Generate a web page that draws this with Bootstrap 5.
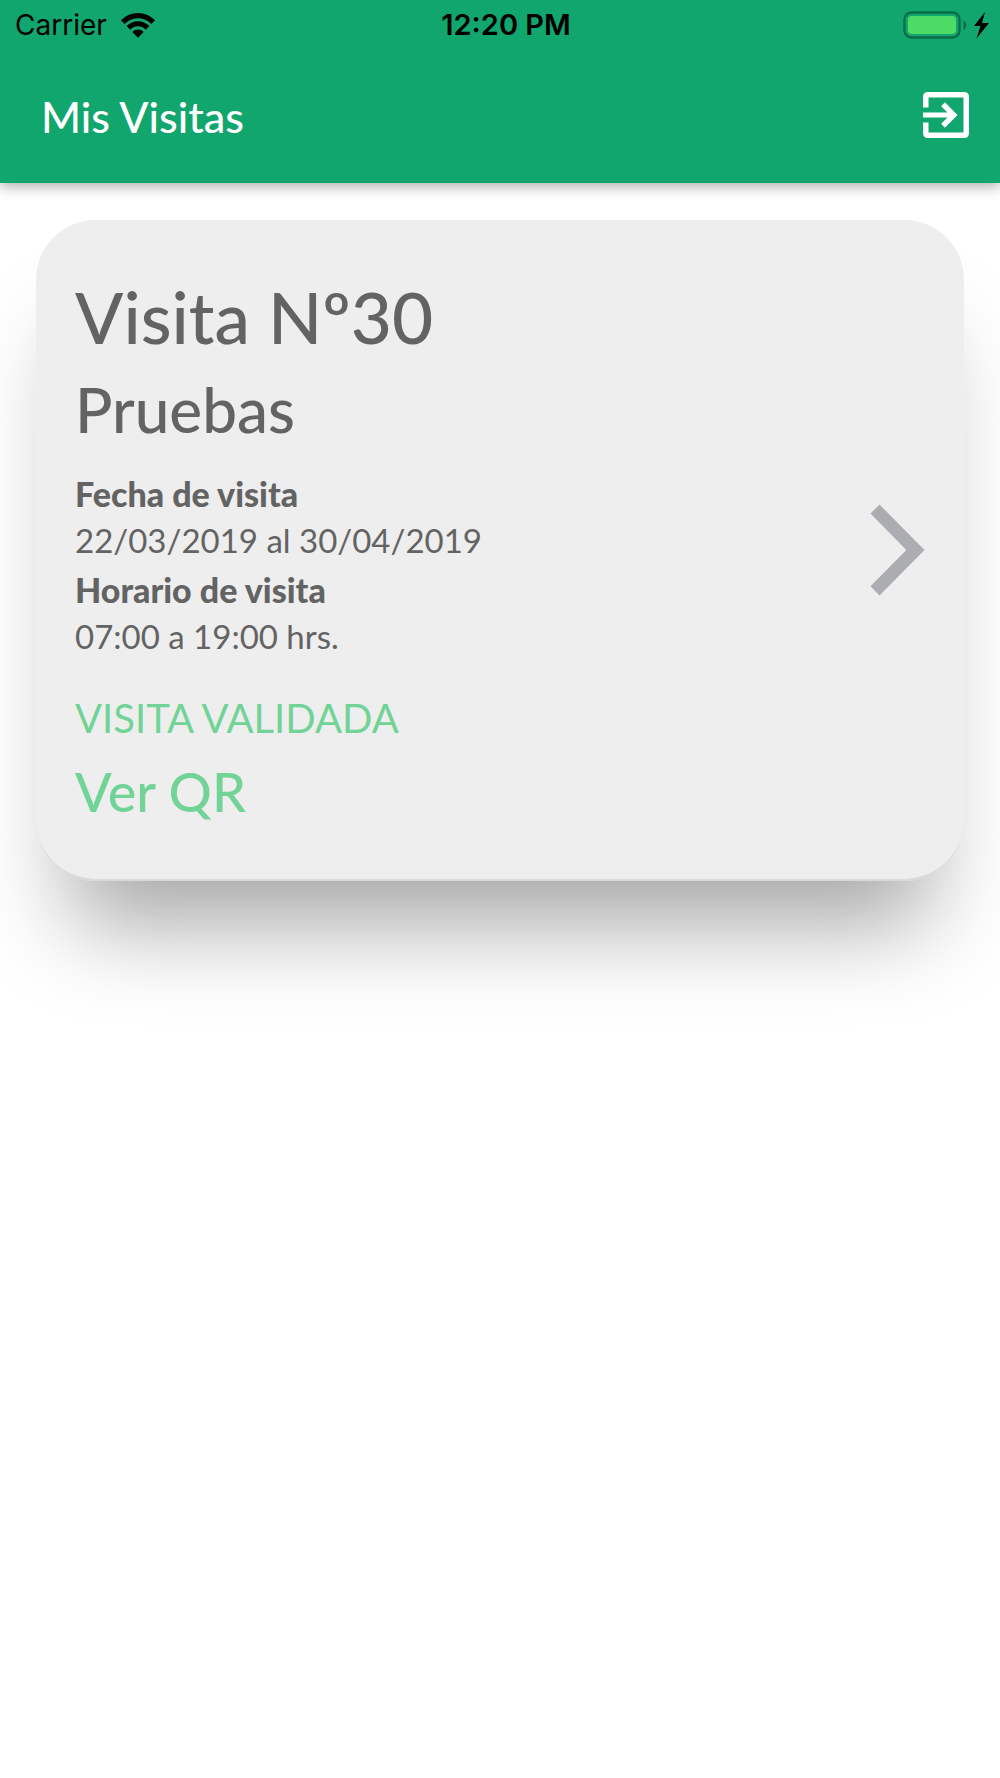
<!DOCTYPE html>
<html lang="es">
<head>
<meta charset="utf-8">
<meta name="viewport" content="width=device-width, initial-scale=1">
<title>Mis Visitas</title>
<link href="https://cdn.jsdelivr.net/npm/bootstrap@5.3.0/dist/css/bootstrap.min.css" rel="stylesheet">
<style>
  body { font-family: Lato, "Open Sans", sans-serif; background: #fff; color: #636363; }
  .app-header { background: #11a66d; box-shadow: 0 4px 12px rgba(0,0,0,.3); }
  .status-bar { font-family: Inter, "Liberation Sans", sans-serif; font-size: 28px; line-height: 50px; color: #000; padding: 0 11px 0 15px; }
  .carrier { gap: 14px; }
  .status-time { font-size: 29px; font-weight: 600; padding-left: 8px; }
  .title-bar { height: 133px; padding: 0 29px 4px 41px; }
  .title-bar h1 { font-size: 43px; line-height: 60px; font-weight: 500; color: #fff; padding-top: 4px; }
  .visit-list { padding: 37px 36px; }
  .visit-card { background: #eee; border-radius: 60px; padding: 51px 38px 53px 39px; color: #636363;
    box-shadow: inset 0 -3px 1px -1px #d8d8d8, 0 78px 92px -34px rgba(0,0,0,.35); }
  .visit-number { font-size: 71px; line-height: 92px; font-weight: 500; }
  .visit-name { font-size: 62px; line-height: 92px; font-weight: 500; }
  .visit-data { font-size: 33px; line-height: 46px; margin-bottom: 25px; }
  .visit-data dt { font-size: 34px; font-weight: 900; }
  .visit-state { font-size: 40px; line-height: 60px; color: #71d496; }
  .qr-link { font-size: 54px; line-height: 72px; font-weight: 500; color: #71d496; }
</style>
</head>
<body class="min-vh-100">
<header class="app-header">
  <div class="status-bar row g-0 align-items-center">
    <div class="carrier col d-flex align-items-center">
      <span>Carrier</span>
      <svg width="34" height="25" viewBox="0 0 34 25" aria-hidden="true"><path d="M0 7.2Q7.5 0 17 0t17 7.2l-3.6 3.7Q24.600 5.300 17 5.300T3.600 10.900zM5.600 13Q10.500 8.200 17 8.200T28.400 13l-3.700 3.700Q21.500 13.300 17 13.300t-7.700 3.400zM11.300 18.900Q13.500 16.500 17 16.500t5.700 2.400L17 24.700z"/></svg>
    </div>
    <div class="col-auto status-time">12:20 PM</div>
    <div class="col d-flex align-items-center justify-content-end">
      <svg width="86" height="28" viewBox="0 0 86 28" aria-hidden="true">
        <rect x="1.500" y="1.500" width="55" height="25" rx="7" fill="none" stroke="#0c6d4a" stroke-width="2.400"/>
        <rect x="5" y="5" width="48" height="18" rx="4" fill="#4cdb64"/>
        <path d="M60.500 9q3 2 3 5t-3 5z" fill="#0c6d4a"/>
        <path d="M82 1L71 15h6.500l-4 12.500L86 12h-7z"/>
      </svg>
    </div>
  </div>
  <div class="title-bar d-flex align-items-center justify-content-between">
    <h1 class="mb-0">Mis Visitas</h1>
    <button type="button" class="btn p-0 border-0 d-flex" aria-label="Salir">
      <svg width="50" height="50" viewBox="0 0 50 50" fill="#fff"><path d="M2 17.500V7q0-5 5-5h36q5 0 5 5v36q0 5-5 5H7q-5 0-5-5V32.500h5.500v10h35v-35h-35v10z"/><path d="M2 22.500h24.500l-6.300-6.300 3.700-4L36.500 25 23.900 37.800l-3.700-4 6.300-6.300H2z"/></svg>
    </button>
  </div>
</header>
<main class="visit-list">
  <article class="visit-card d-flex align-items-center justify-content-between">
    <div class="d-flex flex-column align-items-start">
      <h2 class="visit-number mb-0">Visita Nº30</h2>
      <h3 class="visit-name mb-3">Pruebas</h3>
      <dl class="visit-data">
        <dt>Fecha de visita</dt>
        <dd class="mb-1">22/03/2019 al 30/04/2019</dd>
        <dt>Horario de visita</dt>
        <dd class="mb-1">07:00 a 19:00 hrs.</dd>
      </dl>
      <p class="visit-state mb-2">VISITA VALIDADA</p>
      <a href="#qr" class="qr-link text-decoration-none">Ver QR</a>
    </div>
    <button type="button" class="btn p-0 border-0 d-flex" aria-label="Ver detalle">
      <svg width="56" height="92" viewBox="0 0 56 92" fill="#acadb1"><path d="M0.500 9.500L9.500 .500 54.500 46 9.500 91.500.500 82.300 36.300 46z"/></svg>
    </button>
  </article>
</main>
<script src="https://cdn.jsdelivr.net/npm/bootstrap@5.3.0/dist/js/bootstrap.bundle.min.js"></script>
</body>
</html>
